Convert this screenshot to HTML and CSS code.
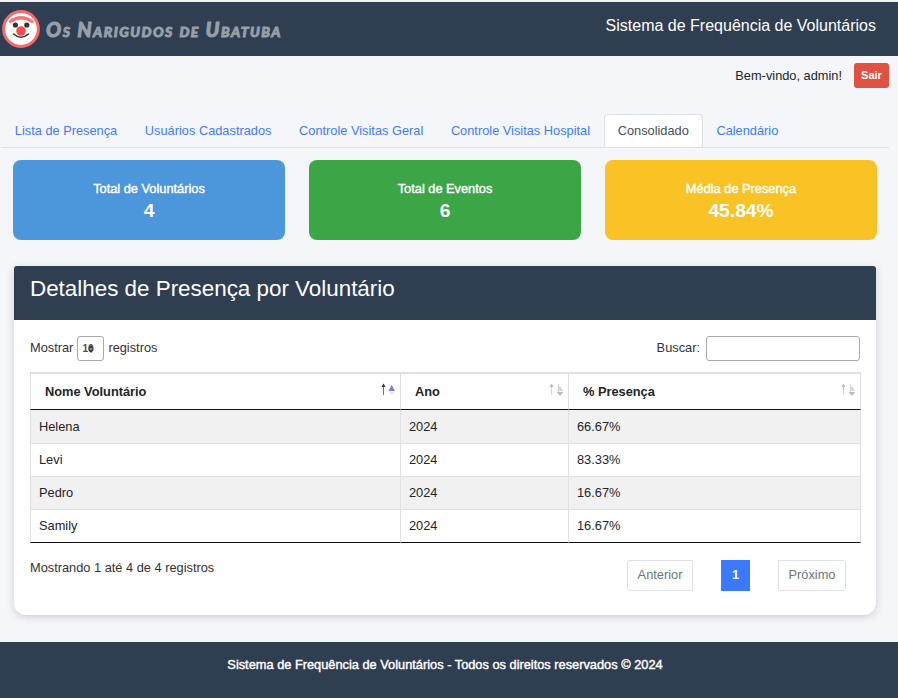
FILE: index.html
```html
<!DOCTYPE html>
<html lang="pt-BR">
<head>
<meta charset="utf-8">
<title>Sistema de Frequência de Voluntários</title>
<link rel="stylesheet" href="styles.css">
</head>
<body>
<header class="topbar">
  <div class="brand">
    <svg class="logo" width="38" height="38" viewBox="0 0 38 38">
      <circle cx="19" cy="19" r="17.4" fill="#fff" stroke="#f96969" stroke-width="3"/>
      <path d="M8.5 11.5Q19 4 30 11.5" fill="none" stroke="#f87474" stroke-width="3.2" stroke-linecap="round"/>
      <circle cx="13.4" cy="15" r="2.6" fill="#333"/>
      <circle cx="24.8" cy="15" r="2.6" fill="#333"/>
      <path d="M11.5 24Q19 30.5 26.5 24" fill="none" stroke="#333" stroke-width="1.6" stroke-linecap="round"/>
      <circle cx="19" cy="21" r="4.8" fill="#ff4a4a"/>
    </svg>
    <span class="brand-name">Os Narigudos de Ubatuba</span>
  </div>
  <div class="system-name">Sistema de Frequência de Voluntários</div>
</header>
<div class="userbar"><span>Bem-vindo, admin!</span><button class="logout">Sair</button></div>
<nav class="tabs">
  <a>Lista de Presença</a><a>Usuários Cadastrados</a><a>Controle Visitas Geral</a><a>Controle Visitas Hospital</a><a class="active">Consolidado</a><a>Calendário</a>
</nav>
<section class="cards">
  <div class="card blue"><h6>Total de Voluntários</h6><strong>4</strong></div>
  <div class="card green"><h6>Total de Eventos</h6><strong>6</strong></div>
  <div class="card yellow"><h6>Média de Presença</h6><strong>45.84%</strong></div>
</section>
<main class="panel">
  <h2>Detalhes de Presença por Voluntário</h2>
  <div class="panel-body">
    <div class="controls">
      <label>Mostrar <span class="select"><span>10</span><svg width="6" height="8" viewBox="0 0 6 8"><path d="M0 3.5L3 0 6 3.5zM0 4.5L3 8 6 4.5z" fill="#343a40"/></svg></span> registros</label>
      <label>Buscar: <input type="text"></label>
    </div>
    <table>
      <colgroup><col class="c1"><col class="c2"><col class="c3"></colgroup>
      <thead><tr>
        <th><div>Nome Voluntário<svg class="sort" width="15" height="14" viewBox="0 0 15 14"><path d="M2.5 12V2" fill="none" stroke="#777"/><path d="M.5 4L2.5 .5 4.5 4z" fill="#333"/><path d="M7.5 8L10.7 2 14 8z" fill="#7b7bdc"/><path d="M8.5 9.2h4.5L10.7 11.5z" fill="#ddd"/></svg></div></th>
        <th><div>Ano<svg class="sort" width="15" height="14" viewBox="0 0 15 14"><path d="M2.5 12V2M9.5 1V11" fill="none" stroke="#d5d5d5"/><path d="M.5 4L2.5 .5 4.5 4z" fill="#bbb"/><path d="M8 8L11 3 14 8z" fill="#d5d5d5"/><path d="M7.5 9h6.8L11 13z" fill="#bdbdbd"/></svg></div></th>
        <th><div>% Presença<svg class="sort" width="15" height="14" viewBox="0 0 15 14"><path d="M2.5 12V2M9.5 1V11" fill="none" stroke="#d5d5d5"/><path d="M.5 4L2.5 .5 4.5 4z" fill="#bbb"/><path d="M8 8L11 3 14 8z" fill="#d5d5d5"/><path d="M7.5 9h6.8L11 13z" fill="#bdbdbd"/></svg></div></th>
      </tr></thead>
      <tbody>
        <tr><td>Helena</td><td>2024</td><td>66.67%</td></tr>
        <tr><td>Levi</td><td>2024</td><td>83.33%</td></tr>
        <tr><td>Pedro</td><td>2024</td><td>16.67%</td></tr>
        <tr><td>Samily</td><td>2024</td><td>16.67%</td></tr>
      </tbody>
    </table>
    <div class="table-footer">
      <span class="info">Mostrando 1 até 4 de 4 registros</span>
      <div class="pages"><span class="page prev">Anterior</span><span class="page current">1</span><span class="page next">Próximo</span></div>
    </div>
  </div>
</main>
<footer>Sistema de Frequência de Voluntários - Todos os direitos reservados © 2024</footer>
</body>
</html>
```
FILE: styles.css
```css
* { box-sizing: border-box; }
body {
  margin: 0;
  height: 698px;
  overflow: hidden;
  display: flex;
  flex-direction: column;
  border-top: 2px solid #f3f1f2;
  background: #f4f6fa;
  color: #212529;
  font: 12.8px/20px "Liberation Sans", Arial, sans-serif;
}
.topbar {
  height: 54px;
  flex: none;
  display: flex;
  justify-content: space-between;
  padding: 8px 22px 0 2px;
  background: #2f3e50;
}
.brand { display: flex; gap: 6px; }
.brand-name {
  color: #97a0a9;
  font: italic 900 20px/39px Lato, sans-serif;
  font-variant: small-caps;
  letter-spacing: 1.5px;
  -webkit-text-stroke: .9px #97a0a9;
  white-space: nowrap;
}
.system-name { color: #fff; font-size: 16px; line-height: 31px; }
.userbar {
  height: 58px;
  flex: none;
  display: flex;
  justify-content: flex-end;
  align-items: flex-start;
  gap: 12px;
  padding: 7px 9px 0 0;
  line-height: 25px;
}
.logout {
  width: 35px;
  height: 25px;
  padding: 0;
  border: 0;
  border-radius: 3px;
  background: #df5242;
  color: #fff;
  font: bold 11px/25px "Liberation Sans", Arial, sans-serif;
}
.tabs {
  height: 34px;
  flex: none;
  display: flex;
  margin: 0 9px 0 1px;
  border-bottom: 1px solid #dee2e6;
}
.tabs a { height: 33px; padding: 0 12.8px; border: 1px solid transparent; border-bottom: 0; color: #3f7cfb; line-height: 32px; white-space: nowrap; }
.tabs .active { background: #fff; border-color: #dee2e6; border-radius: 4px 4px 0 0; color: #495057; }
.cards { display: grid; grid-template-columns: repeat(3, 272px); gap: 24px; margin: 12px 0 0 13px; flex: none; }
.card { height: 80px; border-radius: 8px; padding-top: 18px; text-align: center; color: #fff; }
.card h6 { margin: 0; font-size: 12.8px; line-height: 21px; font-weight: 400; -webkit-text-stroke: .4px #fff; }
.card strong { display: block; font-size: 19.2px; line-height: 24px; }
.blue { background: #4c96db; }
.green { background: #3ca646; }
.yellow { background: #f9c325; }
.panel { width: 862px; height: 349px; flex: none; margin: 26px 0 0 14px; background: #fff; border-radius: 3px 3px 12px 12px; box-shadow: 0 2px 8px rgba(0,0,0,.16); }
.panel h2 { height: 54px; margin: 0; padding: 8px 16px; border-radius: 3px 3px 0 0; background: #2f3e50; color: #fff; font-size: 22.4px; line-height: 29px; font-weight: 400; }
.panel-body { padding: 16px 15px 0 16px; }
.controls { height: 36px; display: flex; justify-content: space-between; padding-right: 1px; color: #333; }
.controls label { display: flex; height: 25px; line-height: 24px; }
.select { display: flex; align-items: center; width: 27px; height: 25px; margin: 0 4px; padding-left: 4px; border: 1px solid #aaa; border-radius: 3px; font-size: 10px; font-weight: bold; color: #495057; }
.select svg { margin-left: -6px; }
.controls input { width: 154px; height: 25px; margin-left: 6px; border: 1px solid #aaa; border-radius: 3px; background: #fff; }
table { width: 831px; table-layout: fixed; border-collapse: separate; border-spacing: 0; }
.c1 { width: 371px; }
.c2 { width: 168px; }
.c3 { width: 292px; }
th, td { border-right: 1px solid #dee2e6; text-align: left; }
th:first-child, td:first-child { border-left: 1px solid #dee2e6; }
th { height: 38px; padding: 0 4px 0 14px; border-top: 2px solid #dee2e6; border-bottom: 1px solid #111; }
th div { display: flex; justify-content: space-between; height: 35px; line-height: 35px; }
.sort { margin-top: 9px; }
td { height: 33px; padding: 0 8px; border-bottom: 1px solid #dee2e6; line-height: 32px; }
tbody tr:first-child td { height: 34px; }
tbody tr:nth-child(odd) td { background: #f1f1f1; }
tbody tr:last-child td { border-bottom-color: #111; }
.table-footer { display: flex; justify-content: space-between; padding: 17px 15px 0 0; color: #333; }
.info { line-height: 16px; }
.pages { display: flex; gap: 28px; }
.page { height: 31px; border: 1px solid #dee2e6; line-height: 28px; text-align: center; color: #6c757d; background: #fff; }
.prev { width: 66px; border-radius: 3px 0 0 3px; }
.current { width: 29px; background: #3b79ff; border-color: #3b79ff; color: #fff; font-weight: bold; }
.next { width: 68px; border-radius: 0 3px 3px 0; }
footer { flex: 1; margin-top: 27px; padding: 13px 8px 0 0; background: #2f3e50; color: #fff; text-align: center; -webkit-text-stroke: .4px #fff; }
```
